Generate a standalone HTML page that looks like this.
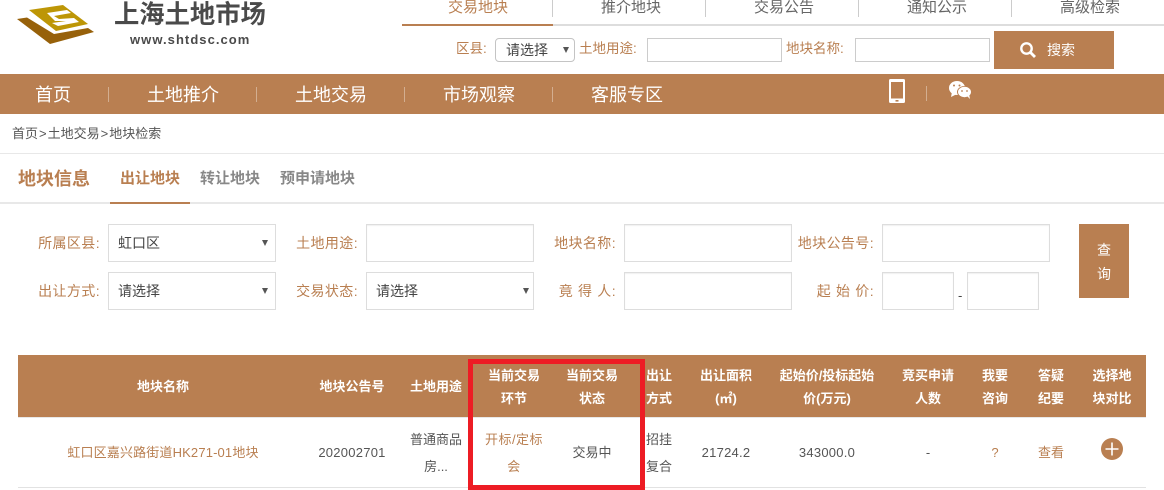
<!DOCTYPE html>
<html lang="zh">
<head>
<meta charset="utf-8">
<title>上海土地市场</title>
<style>
html,body{margin:0;padding:0;background:#fff;}
body{width:1164px;height:490px;position:relative;overflow:hidden;font-family:"Liberation Sans","Noto Sans CJK SC",sans-serif;font-size:13px;color:#555;}
.a{position:absolute;white-space:nowrap;}
.b{position:absolute;box-sizing:border-box;}
.c{position:absolute;white-space:nowrap;text-align:center;width:130px;}
.tab{font-size:15px;line-height:20px;top:-2px;color:#666;}
.nav{font-size:18px;line-height:26px;top:82px;color:#fff;}
.sep{position:absolute;width:1px;background:#d3ae90;}
.lb{font-size:13.5px;line-height:20px;color:#b97f51;}
.fl{font-size:14px;line-height:20px;color:#b97f51;text-align:right;letter-spacing:.4px;}
.in{position:absolute;box-sizing:border-box;border:1px solid #ddd;height:38px;background:#fff;box-shadow:inset 0 1px 1px #f0f0f0;}
.sel{position:absolute;box-sizing:border-box;border:1px solid #ddd;height:38px;background:#fff;font-size:14px;line-height:36px;padding:0 0 0 9px;color:#444;}
.arrow{position:absolute;width:0;height:0;border-left:3.5px solid transparent;border-right:3.5px solid transparent;border-top:6px solid #555;}
.th{font-size:13px;font-weight:bold;color:#fff;line-height:23px;}
.td{font-size:13px;color:#555;line-height:27px;}
.n{letter-spacing:.25px;}
.gt{margin:0 1px;}
</style>
</head>
<body>
<!-- logo -->
<svg class="a" style="left:0;top:0" width="110" height="50" viewBox="0 0 110 50">
<polygon points="29,10 63,5 88,24 56,31" fill="#bd9606"/>
<polygon points="47,13 67,10 71,13 54,16 59,19 74,18 79,22 58,26 52,23 66,21 55,21" fill="#fff"/>
<polygon points="17,19 27,17.5 54,34 88,28 94,32 50,44" fill="#97610a"/>
</svg>
<div class="a" style="left:114px;top:-3px;font-size:25.3px;font-weight:bold;line-height:36px;color:#4a4a4a">上海土地市场</div>
<div class="a" style="left:130px;top:31px;font-size:13px;font-weight:bold;line-height:17px;color:#4a4a4a;letter-spacing:1.05px">www.shtdsc.com</div>

<!-- top tabs -->
<div class="c tab" style="left:413px;color:#b97f51">交易地块</div>
<div class="c tab" style="left:566px">推介地块</div>
<div class="c tab" style="left:719px">交易公告</div>
<div class="c tab" style="left:872px">通知公示</div>
<div class="c tab" style="left:1025px">高级检索</div>
<div class="b" style="left:552px;top:0;width:1px;height:17px;background:#ccc"></div>
<div class="b" style="left:705px;top:0;width:1px;height:17px;background:#ccc"></div>
<div class="b" style="left:858px;top:0;width:1px;height:17px;background:#ccc"></div>
<div class="b" style="left:1011px;top:0;width:1px;height:17px;background:#ccc"></div>
<div class="b" style="left:402px;top:24px;width:762px;height:2px;background:#ddd"></div>
<div class="b" style="left:402px;top:24px;width:151px;height:2px;background:#b97f51"></div>

<!-- quick search -->
<div class="a lb" style="left:456px;top:39px">区县:</div>
<div class="b" style="left:495px;top:38px;width:80px;height:24px;border:1px solid #c4c4c4;border-radius:4px;font-size:14px;line-height:23px;padding-left:10px;color:#444">请选择</div>
<div class="arrow" style="left:563px;top:47px"></div>
<div class="a lb" style="left:579px;top:39px">土地用途:</div>
<div class="b" style="left:647px;top:38px;width:135px;height:24px;border:1px solid #ccc"></div>
<div class="a lb" style="left:786px;top:39px">地块名称:</div>
<div class="b" style="left:855px;top:38px;width:135px;height:24px;border:1px solid #ccc"></div>
<div class="b" style="left:994px;top:31px;width:120px;height:38px;background:#b97f51"></div>
<svg class="a" style="left:1019px;top:41px" width="18" height="18" viewBox="0 0 18 18"><circle cx="7.5" cy="7.5" r="5.2" fill="none" stroke="#fff" stroke-width="2.4"/><line x1="11.5" y1="11.5" x2="16" y2="16" stroke="#fff" stroke-width="2.8"/></svg>
<div class="a" style="left:1047px;top:40px;font-size:14px;line-height:20px;color:#fff">搜索</div>

<!-- nav -->
<div class="b" style="left:0;top:74px;width:1164px;height:40px;background:#b97f51"></div>
<div class="a nav" style="left:35px">首页</div>
<div class="a nav" style="left:147px">土地推介</div>
<div class="a nav" style="left:295px">土地交易</div>
<div class="a nav" style="left:443px">市场观察</div>
<div class="a nav" style="left:591px">客服专区</div>
<div class="sep" style="left:108px;top:87px;height:15px"></div>
<div class="sep" style="left:256px;top:87px;height:15px"></div>
<div class="sep" style="left:404px;top:87px;height:15px"></div>
<div class="sep" style="left:552px;top:87px;height:15px"></div>
<div class="sep" style="left:926px;top:86px;height:15px"></div>
<svg class="a" style="left:888px;top:78px" width="18" height="26" viewBox="0 0 18 26">
<rect x="1" y="1" width="16" height="24" rx="1.5" fill="#fff"/>
<rect x="3" y="4" width="12" height="16.5" fill="#b97f51"/>
<rect x="7.5" y="22" width="3" height="1.6" fill="#b97f51"/>
</svg>
<svg class="a" style="left:948px;top:80px" width="25" height="20" viewBox="0 0 25 20">
<ellipse cx="9" cy="8" rx="8" ry="7" fill="#fff"/>
<polygon points="4,12 3,17 9,14" fill="#fff"/>
<ellipse cx="16.5" cy="12" rx="7.5" ry="6" fill="#b97f51"/>
<ellipse cx="16.5" cy="12" rx="6.5" ry="5.2" fill="#fff"/>
<polygon points="19,16 22,19 21,14" fill="#fff"/>
<circle cx="6" cy="5.5" r="1" fill="#b97f51"/><circle cx="11.5" cy="5.5" r="1" fill="#b97f51"/>
<circle cx="14" cy="11" r=".9" fill="#b97f51"/><circle cx="19" cy="11" r=".9" fill="#b97f51"/>
</svg>

<!-- breadcrumb -->
<div class="a" style="left:12px;top:124px;font-size:13px;line-height:20px;color:#555">首页<span class="gt">&gt;</span>土地交易<span class="gt">&gt;</span>地块检索</div>
<div class="b" style="left:0;top:153px;width:1164px;height:1px;background:#e8e8e8"></div>

<!-- section tabs -->
<div class="a" style="left:18px;top:167px;font-size:18px;font-weight:bold;line-height:24px;color:#b97f51">地块信息</div>
<div class="a" style="left:120px;top:169px;font-size:15px;font-weight:bold;line-height:20px;color:#b97f51">出让地块</div>
<div class="a" style="left:200px;top:169px;font-size:15px;font-weight:bold;line-height:20px;color:#888">转让地块</div>
<div class="a" style="left:280px;top:169px;font-size:15px;font-weight:bold;line-height:20px;color:#888">预申请地块</div>
<div class="b" style="left:0;top:202px;width:1164px;height:2px;background:#e8e8e8"></div>
<div class="b" style="left:110px;top:202px;width:80px;height:2px;background:#b97f51"></div>

<!-- form -->
<div class="a fl" style="left:0;width:100px;top:233px">所属区县:</div>
<div class="sel" style="left:108px;top:224px;width:168px">虹口区</div>
<div class="arrow" style="left:262px;top:240px"></div>
<div class="a fl" style="left:258px;width:100px;top:233px">土地用途:</div>
<div class="in" style="left:366px;top:224px;width:168px"></div>
<div class="a fl" style="left:516px;width:100px;top:233px">地块名称:</div>
<div class="in" style="left:624px;top:224px;width:168px"></div>
<div class="a fl" style="left:774px;width:100px;top:233px">地块公告号:</div>
<div class="in" style="left:882px;top:224px;width:168px"></div>

<div class="a fl" style="left:0;width:100px;top:281px">出让方式:</div>
<div class="sel" style="left:108px;top:272px;width:168px">请选择</div>
<div class="arrow" style="left:262px;top:288px"></div>
<div class="a fl" style="left:258px;width:100px;top:281px">交易状态:</div>
<div class="sel" style="left:366px;top:272px;width:168px">请选择</div>
<div class="arrow" style="left:523px;top:288px"></div>
<div class="a fl" style="left:516px;width:100px;top:281px;word-spacing:.6px">竟 得 人:</div>
<div class="in" style="left:624px;top:272px;width:168px"></div>
<div class="a fl" style="left:774px;width:100px;top:281px;word-spacing:.6px">起 始 价:</div>
<div class="in" style="left:882px;top:272px;width:72px"></div>
<div class="a" style="left:958px;top:286px;font-size:13px;line-height:20px;color:#444">-</div>
<div class="in" style="left:967px;top:272px;width:72px"></div>
<div class="b" style="left:1079px;top:224px;width:50px;height:74px;background:#b97f51;color:#fff;font-size:14px;line-height:24px;text-align:center;padding-top:14px">查<br>询</div>

<!-- table -->
<div class="b" style="left:18px;top:355px;width:1128px;height:62px;background:#b97f51"></div>
<div class="b" style="left:18px;top:417px;width:1128px;height:1px;background:#e8e8e8"></div>
<div class="b" style="left:18px;top:487px;width:1128px;height:1px;background:#e2e2e2"></div>

<div class="c th" style="left:98px;top:375px">地块名称</div>
<div class="c th" style="left:287px;top:375px">地块公告号</div>
<div class="c th" style="left:371px;top:375px">土地用途</div>
<div class="c th" style="left:449px;top:364px">当前交易<br>环节</div>
<div class="c th" style="left:527px;top:364px">当前交易<br>状态</div>
<div class="c th" style="left:594px;top:364px">出让<br>方式</div>
<div class="c th" style="left:661px;top:364px">出让面积<br>(㎡)</div>
<div class="c th" style="left:762px;top:364px">起始价/投标起始<br>价(万元)</div>
<div class="c th" style="left:863px;top:364px">竞买申请<br>人数</div>
<div class="c th" style="left:930px;top:364px">我要<br>咨询</div>
<div class="c th" style="left:986px;top:364px">答疑<br>纪要</div>
<div class="c th" style="left:1047px;top:364px">选择地<br>块对比</div>

<div class="c td" style="left:13px;width:300px;top:439px;color:#b97f51;letter-spacing:.15px">虹口区嘉兴路街道HK271-01地块</div>
<div class="c td n" style="left:287px;top:439px">202002701</div>
<div class="c td" style="left:371px;top:426px">普通商品<br>房...</div>
<div class="c td" style="left:449px;top:426px;color:#b97f51;letter-spacing:.5px">开标/定标<br>会</div>
<div class="c td" style="left:527px;top:439px">交易中</div>
<div class="c td" style="left:594px;top:426px">招挂<br>复合</div>
<div class="c td n" style="left:661px;top:439px">21724.2</div>
<div class="c td n" style="left:762px;top:439px">343000.0</div>
<div class="c td" style="left:863px;top:439px">-</div>
<div class="c td" style="left:930px;top:439px;color:#b97f51">?</div>
<div class="c td" style="left:986px;top:439px;color:#b97f51">查看</div>
<svg class="a" style="left:1101px;top:438px" width="22" height="22" viewBox="0 0 22 22"><circle cx="11" cy="11" r="11" fill="#b97f51"/><path d="M11 4.5V17.5M4.5 11H17.5" stroke="#fff" stroke-width="1.6"/></svg>

<!-- red highlight -->
<div class="b" style="left:468px;top:359px;width:177px;height:131px;border:5px solid #ed1c24"></div>
</body>
</html>
